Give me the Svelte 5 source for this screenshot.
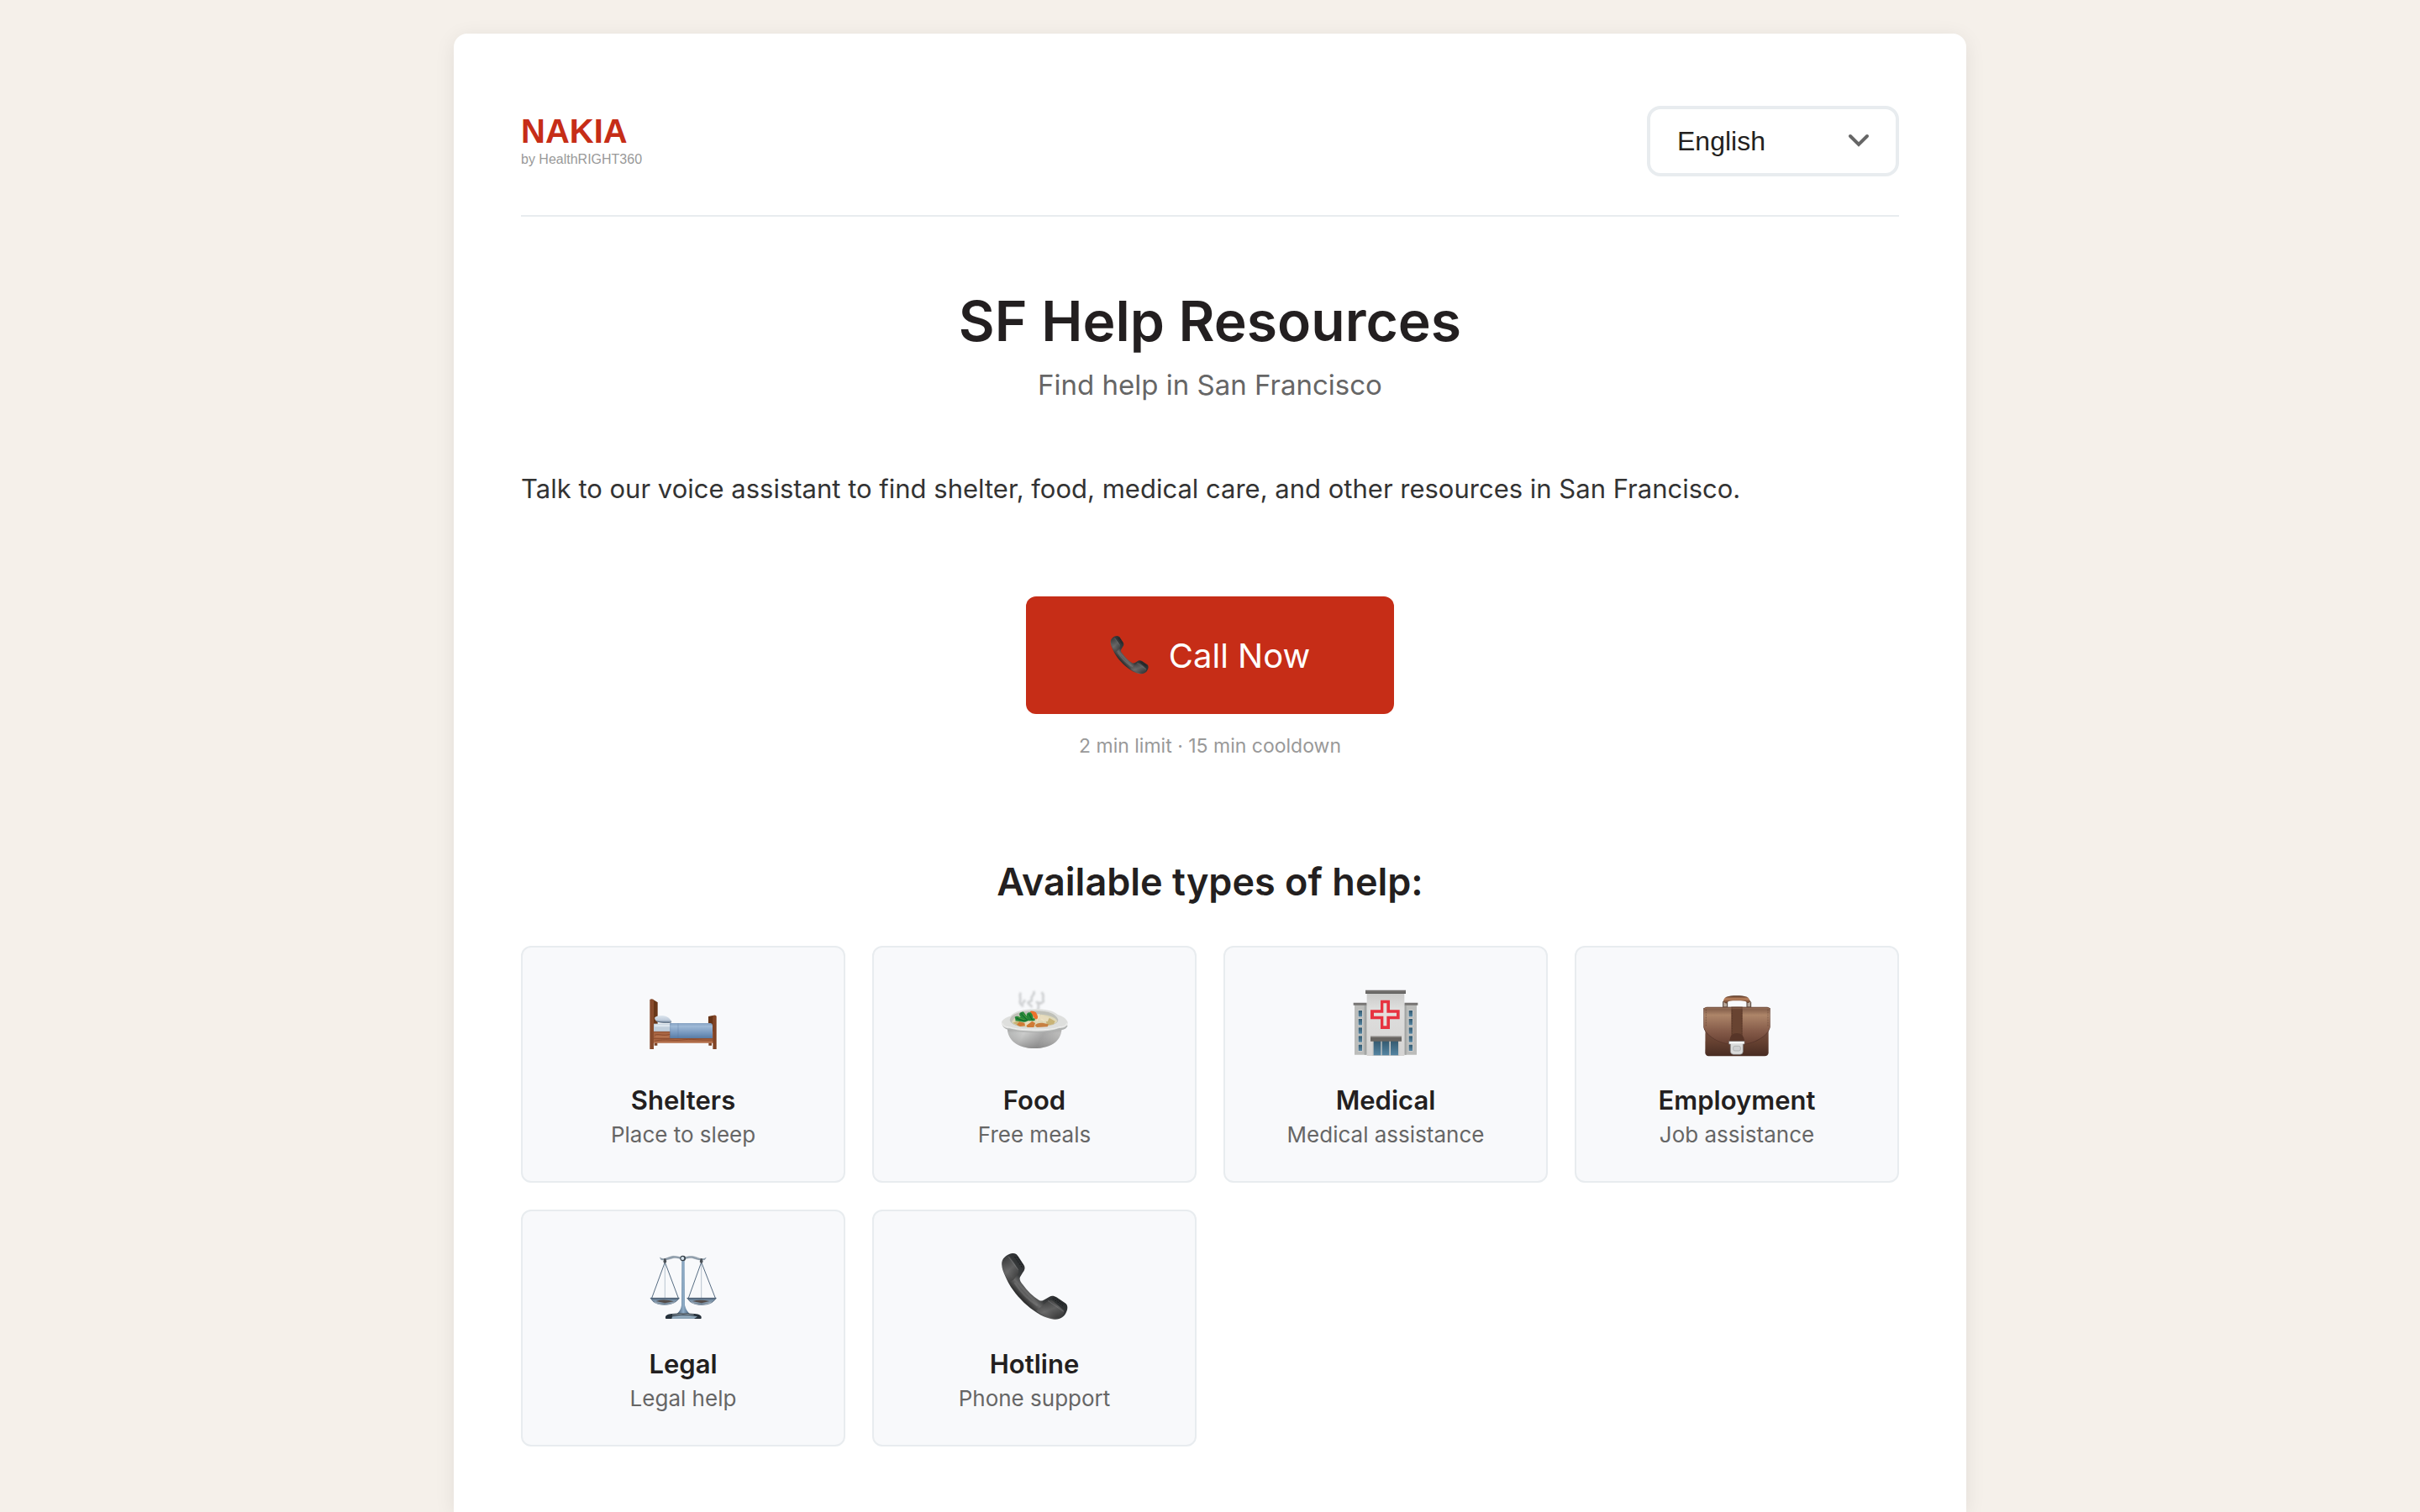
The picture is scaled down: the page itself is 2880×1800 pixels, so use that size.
<script>
	let language = $state("en");

	const languages = [
		{ code: "en", label: "English" },
		{ code: "es", label: "Español" },
		{ code: "zh", label: "中文" },
		{ code: "tl", label: "Filipino" }
	];

	const categories = [
		{ icon: "bed", title: "Shelters", text: "Place to sleep" },
		{ icon: "food", title: "Food", text: "Free meals" },
		{ icon: "hospital", title: "Medical", text: "Medical assistance" },
		{ icon: "briefcase", title: "Employment", text: "Job assistance" },
		{ icon: "scales", title: "Legal", text: "Legal help" },
		{ icon: "phone", title: "Hotline", text: "Phone support" }
	];
</script>

{#snippet phone(id)}
	<svg viewBox="93 67 240 240" aria-hidden="true">
		<defs>
			<linearGradient id="{id}-body" gradientUnits="userSpaceOnUse" x1="235" y1="160" x2="165" y2="225">
				<stop offset="0" stop-color="#2c2f31" />
				<stop offset="0.5" stop-color="#3b3d3e" />
				<stop offset="0.72" stop-color="#6a6a6a" />
				<stop offset="1" stop-color="#303030" />
			</linearGradient>
			<linearGradient id="{id}-ear" x1="0" y1="0" x2="0.6" y2="1">
				<stop offset="0" stop-color="#333" />
				<stop offset="0.6" stop-color="#6b6b6b" />
				<stop offset="1" stop-color="#404040" />
			</linearGradient>
		</defs>
		<path fill="url(#{id}-body)" d="M97 98C101 81 119 68 136 67C146 67 152 72 156 79L176 110C181 119 178 127 173 134L162 152C158 161 164 169 171 178C189 202 207 221 229 234C238 239 244 236 250 232L267 222C276 217 285 220 292 224L323 245C332 251 333 263 328 275C320 296 303 305 283 303C251 300 217 279 187 253C152 223 124 185 109 149C101 130 94 115 97 98Z" />
		<path fill="url(#{id}-ear)" d="M99 99C103 83 116 72 124 77C133 91 146 108 155 124C161 135 152 145 143 156C137 164 128 169 121 165C109 147 95 118 99 99Z" opacity="0.8" />
		<path fill="url(#{id}-ear)" d="M262 237C271 230 281 238 290 247L318 270C324 279 309 298 292 300C267 303 237 286 219 272C230 264 249 247 262 237Z" opacity="0.8" />
		<path fill="none" stroke="#85888a" stroke-width="2" d="M121 80L155 126M261 236L317 275" opacity="0.7" />
		<path fill="none" stroke="#888" stroke-width="7" stroke-linecap="round" d="M144 174C164 205 193 234 222 252" opacity="0.35" />
		<path fill="none" stroke="#17191b" stroke-width="3" stroke-linecap="round" stroke-dasharray="4 6" d="M143 80L168 116M151 80L171 108M279 229L314 253M285 226L318 249" />
	</svg>
{/snippet}

{#snippet bed()}
	<svg viewBox="99 55 240 240" aria-hidden="true">
		<defs>
			<linearGradient id="bed-blanket" x1="0" y1="0" x2="0" y2="1">
				<stop offset="0" stop-color="#7897bb" />
				<stop offset="0.2" stop-color="#a0bad7" />
				<stop offset="0.7" stop-color="#7294bc" />
				<stop offset="1" stop-color="#587ca5" />
			</linearGradient>
			<linearGradient id="bed-post" x1="0" y1="0" x2="1" y2="0">
				<stop offset="0" stop-color="#84482a" />
				<stop offset="0.5" stop-color="#bc7850" />
				<stop offset="1" stop-color="#7d4022" />
			</linearGradient>
			<linearGradient id="bed-pillow" x1="0" y1="0" x2="0" y2="1">
				<stop offset="0" stop-color="#dce5ee" />
				<stop offset="0.6" stop-color="#c0ccdb" />
				<stop offset="1" stop-color="#667b92" />
			</linearGradient>
		</defs>
		<path fill="#693719" d="M112 91L128 101V230H112Z" />
		<path fill="#673417" d="M309 151L328 147V228H309Z" />
		<path fill="#7c4427" d="M116 245H127V255H116ZM310 245H321V255H310Z" />
		<rect x="113" y="177" width="63" height="31" fill="#c0cedb" />
		<path fill="#dce5ed" d="M117 180H174V188H117Z" />
		<path fill="url(#bed-pillow)" d="M117 156C122 149 136 147 151 149C167 153 174 161 178 171C166 176 145 175 131 172C123 169 118 164 117 156Z" />
		<path fill="none" stroke="#435468" stroke-width="2" d="M124 168C139 174 155 172 176 173" />
		<rect x="113" y="205" width="214" height="41" fill="#a96643" />
		<path fill="none" stroke="#7e4024" stroke-width="2" d="M113 206H176M113 230H326M117 239C160 229 181 240 214 235S278 237 326 235M117 218C134 211 145 223 172 215" />
		<path fill="none" stroke="#cb8a60" stroke-width="2" d="M114 244H325M120 223L168 224" />
		<path fill="url(#bed-blanket)" d="M172 175H318Q324 176 324 184V229H172Z" />
		<path fill="none" stroke="#55779e" stroke-width="1" d="M173 177V228M201 175V229" />
		<path fill="none" stroke="#bdcee0" stroke-width="2" d="M177 178H316" opacity="0.5" />
		<path fill="url(#bed-post)" d="M100 91Q106 86 114 91V268H100ZM325 149Q332 144 338 150V268H325Z" />
	</svg>
{/snippet}

{#snippet food()}
	<svg viewBox="93 55 240 240" aria-hidden="true">
		<defs>
			<linearGradient id="bowl-side" x1="0" y1="0" x2="1" y2="0.2">
				<stop offset="0" stop-color="#b2b4b3" />
				<stop offset="0.35" stop-color="#d1d2d1" />
				<stop offset="0.7" stop-color="#aaa" />
				<stop offset="1" stop-color="#c2c2c1" />
			</linearGradient>
			<linearGradient id="bowl-shade" x1="0" y1="0" x2="0" y2="1">
				<stop offset="0" stop-color="#777" stop-opacity="0.5" />
				<stop offset="0.3" stop-color="#999" stop-opacity="0.1" />
				<stop offset="1" stop-color="#666" stop-opacity="0.5" />
			</linearGradient>
			<filter id="steam" x="-20%" y="-20%" width="140%" height="140%">
				<feGaussianBlur stdDeviation="3" />
			</filter>
		</defs>
		<g fill="none" stroke="#a4a7a9" stroke-width="8" opacity="0.5" filter="url(#steam)">
			<path d="M164 66C157 80 166 83 162 96S171 107 172 117" />
			<path d="M210 61C219 74 199 76 203 89S187 95 191 104S207 110 201 119" />
			<path d="M238 65C252 75 240 82 245 94S222 99 227 111S222 121 225 136" />
			<path d="M180 92L171 106M218 99L239 106" />
		</g>
		<path fill="url(#bowl-side)" d="M116 187C116 212 124 230 140 243C158 258 184 265 213 265S270 258 288 243C304 230 311 212 311 187Z" />
		<path fill="url(#bowl-shade)" d="M116 187C116 212 124 230 140 243C158 258 184 265 213 265S270 258 288 243C304 230 311 212 311 187Z" />
		<path fill="#b0b2b1" d="M99 183C105 195 117 200 129 199C151 205 186 209 221 208C253 208 285 205 302 199C317 201 328 194 332 183Z" />
		<path fill="#dedfdd" d="M96 172C98 162 112 154 127 150C144 132 174 125 213 125S279 130 297 145C313 150 329 160 332 172C334 185 320 194 301 193C276 202 248 205 211 204C173 204 145 200 125 194C109 195 94 185 96 172Z" />
		<path fill="#bfc0b8" d="M125 164C129 143 161 132 211 131S291 142 298 163C299 179 268 188 213 190S129 182 125 164Z" />
		<path fill="#dfd8b8" d="M132 172C137 155 165 143 213 143S289 154 295 168C286 181 256 187 216 189S145 184 132 172Z" />
		<path fill="#c8b377" d="M255 169L267 157L287 168L282 179L258 184ZM136 174L156 165L169 176L160 186Z" />
		<path fill="#e8dcbd" d="M225 155L238 146L265 155L261 169L230 166ZM167 171L192 166L207 176L184 188Z" />
		<path fill="#d07b36" d="M150 181L160 170L178 174L180 185L162 187ZM184 184L205 168L216 175L211 190L188 190Z" />
		<path fill="#c78042" d="M215 183C222 173 239 171 263 179L260 188L222 190Z" />
		<path fill="#ed722b" d="M197 133C203 129 212 132 219 137L229 161H215Z" />
		<path fill="#248637" d="M143 153C149 147 158 151 164 154C155 141 161 137 173 134C181 142 184 148 187 155C180 140 192 135 200 137C207 144 208 151 209 158C216 156 217 163 213 167L189 167C180 176 162 168 145 167C147 162 144 159 143 153Z" />
		<path fill="none" stroke="#0e642e" stroke-width="3" d="M149 158L183 168M165 140L189 166M193 142L206 165" />
		<path fill="none" stroke="#5da33d" stroke-width="2" d="M155 155L178 163M173 142L187 158" />
		<path fill="none" stroke="#eee4c4" stroke-width="4" d="M229 142V151L222 168M238 160L249 168" />
		<path fill="none" stroke="#f1f1f0" stroke-width="3" d="M98 174C104 187 113 189 126 190C156 202 281 202 301 189C315 190 328 183 330 174" />
	</svg>
{/snippet}

{#snippet hospital()}
	<svg viewBox="87 55 240 240" aria-hidden="true">
		<defs>
			<linearGradient id="wall" x1="0" y1="0" x2="0" y2="1">
				<stop offset="0" stop-color="#c9c9c8" />
				<stop offset="0.25" stop-color="#dededd" />
				<stop offset="1" stop-color="#d5d4d3" />
			</linearGradient>
			<linearGradient id="glass" x1="0" y1="0" x2="0" y2="1">
				<stop offset="0" stop-color="#345a70" />
				<stop offset="1" stop-color="#5585a2" />
			</linearGradient>
		</defs>
		<path fill="#bcbdbb" d="M96 108H140V288H96ZM274 108H318V288H274Z" />
		<path fill="#a3a5a4" d="M131 111H140V288H131ZM274 111H281V288H274Z" />
		<path fill="#777574" d="M92 102H140V111H92ZM274 102H322V111H274Z" />
		<path fill="url(#wall)" d="M140 66H274V292H140Z" />
		<path fill="#73716f" d="M135 57H279V69H135Z" />
		<path fill="#5e5d5b" d="M135 66H279V70H135Z" />
		{#each [128, 158, 189, 219, 250] as y}
			<g fill="#d4d4d2">
				<rect x="108" y={y} width="17" height="26" />
				<rect x="288" y={y} width="17" height="26" />
			</g>
			<g fill="url(#glass)">
				<rect x="110" y={y + 2} width="13" height="22" />
				<rect x="290" y={y + 2} width="13" height="22" />
			</g>
		{/each}
		<path fill="#e73340" d="M189 93H222V128H257V161H222V196H189V161H153V128H189Z" />
		<path fill="#e5dfdc" d="M199 104H211V138H246V150H211V185H199V150H165V138H199Z" />
		<path fill="#c9c9c7" d="M160 237H256V292H160Z" />
		<path fill="url(#glass)" d="M164 238H190V290H164ZM194 238H220V290H194ZM225 238H252V290H225Z" />
		<path fill="#686562" d="M153 222H264V240H153Z" />
		<path fill="#898583" d="M153 222H264V226H153Z" />
	</svg>
{/snippet}

{#snippet briefcase()}
	<svg viewBox="111 55 240 240" aria-hidden="true">
		<defs>
			<linearGradient id="case-back" x1="0" y1="0" x2="0" y2="1">
				<stop offset="0" stop-color="#8c6655" />
				<stop offset="0.7" stop-color="#664131" />
				<stop offset="1" stop-color="#482c22" />
			</linearGradient>
			<linearGradient id="case-flap" x1="0" y1="0" x2="0" y2="1">
				<stop offset="0" stop-color="#775341" />
				<stop offset="0.22" stop-color="#ad8569" />
				<stop offset="0.65" stop-color="#855b49" />
				<stop offset="1" stop-color="#684133" />
			</linearGradient>
			<linearGradient id="case-handle" x1="0" y1="0" x2="0" y2="1">
				<stop offset="0" stop-color="#50301f" />
				<stop offset="0.4" stop-color="#bd8460" />
				<stop offset="1" stop-color="#553321" />
			</linearGradient>
		</defs>
		<path fill="#b7a79a" stroke="#4d3b32" stroke-width="3" d="M182 118V98L190 92L197 98V118ZM267 118V98L274 92L281 101V118Z" />
		<path fill="url(#case-handle)" d="M183 99C183 80 200 77 230 77S278 80 278 100L269 104C265 95 251 95 230 95S200 95 193 105Z" />
		<path fill="url(#case-back)" d="M119 121H344V281Q343 293 330 293H130Q119 292 118 281Z" />
		<path fill="#55342a" d="M112 121Q232 114 350 121V190C343 220 296 250 252 252H212C165 249 117 218 112 190Z" />
		<path fill="url(#case-flap)" d="M113 123Q116 117 124 117H339Q347 117 349 124V188C344 218 296 247 251 250H211C164 246 118 216 113 188Z" />
		<path fill="#684331" d="M211 117H251V235H211Z" />
		<path fill="none" stroke="#3d271f" stroke-width="2" stroke-dasharray="5 4" d="M214 120V235M249 120V235M121 126V188M342 126V188" opacity="0.6" />
		<path fill="none" stroke="#ba9174" stroke-width="2" d="M117 123H345" opacity="0.5" />
		<path fill="#573528" d="M205 240C206 219 216 211 231 211S257 220 258 240Z" />
		<path fill="#dadbdb" stroke="#828282" stroke-width="2" d="M203 240H258V250H253V277Q252 287 242 287H219Q209 286 208 277V250H203Z" />
		<path fill="#f5f5f5" d="M204 241H257V248H204Z" />
		<rect x="218" y="257" width="26" height="17" rx="6" fill="#cfd0d1" stroke="#a2a4a5" stroke-width="2" />
	</svg>
{/snippet}

{#snippet scales()}
	<svg viewBox="99 67 240 240" aria-hidden="true">
		<defs>
			<linearGradient id="steel" x1="0" y1="0" x2="1" y2="0">
				<stop offset="0" stop-color="#45586d" />
				<stop offset="0.5" stop-color="#8fadc8" />
				<stop offset="1" stop-color="#48617c" />
			</linearGradient>
			<linearGradient id="pan" x1="0" y1="0" x2="0" y2="1">
				<stop offset="0" stop-color="#425366" />
				<stop offset="0.3" stop-color="#7891a8" />
				<stop offset="0.7" stop-color="#8a9cac" />
				<stop offset="1" stop-color="#304b65" />
			</linearGradient>
		</defs>
		<g fill="none" stroke="#566c82" stroke-width="3">
			<path d="M154 89V226M284 89V226" stroke="#9aabbb" stroke-width="2" />
			<path d="M154 99L107 227M154 99L202 227M284 99L238 227M284 99L334 227" />
		</g>
		<path fill="#92a0ad" stroke="#68798a" stroke-width="1" d="M136 82C151 93 164 80 183 77C198 77 205 80 218 83C231 79 241 77 255 78C271 80 285 93 301 83L296 90C277 94 264 87 252 84C238 82 229 88 218 89C207 87 198 82 184 84C169 88 156 94 140 90Z" />
		<path fill="url(#steel)" d="M214 87H224L225 252C229 268 235 275 242 283H197C207 274 211 266 213 253Z" />
		<circle cx="218" cy="85" r="10" fill="#353f48" />
		<circle cx="217" cy="85" r="6" fill="#d6e3ed" />
		<path fill="#4b5157" d="M151 86H157L160 98L154 104L148 98ZM281 86H287L290 98L284 104L278 98Z" />
		<path fill="url(#pan)" stroke="#3d5268" stroke-width="2" d="M102 227H205C203 232 198 235 194 239C174 254 133 255 113 240ZM233 227H337C335 233 328 236 323 242C302 255 263 254 244 240Z" />
		<path fill="#544c49" d="M122 238Q150 229 186 239L154 245ZM252 238Q279 230 313 238L285 245Z" />
		<path fill="none" stroke="#c0ccd6" stroke-width="2" d="M117 243Q152 258 188 243M248 243Q282 258 319 243" />
		<path fill="#26313b" d="M157 301C152 290 163 284 179 283C205 280 234 280 260 283C275 284 289 290 283 301Z" />
		<path fill="#8ca4b7" d="M180 293C196 287 246 286 270 293L258 301H178Z" />
		<path fill="none" stroke="#c7d3db" stroke-width="2" d="M180 287Q219 280 257 286" />
	</svg>
{/snippet}

<main class="page">
	<div class="container">
		<header>
			<div class="logo">
				<span class="logo-name">NAKIA</span>
				<span class="logo-tagline">by HealthRIGHT360</span>
			</div>
			<div class="language">
				<select bind:value={language} aria-label="Language">
					{#each languages as lang}
						<option value={lang.code}>{lang.label}</option>
					{/each}
				</select>
				<svg class="chevron" viewBox="0 0 28 20" aria-hidden="true">
					<path d="M4 4L14 14L24 4" />
				</svg>
			</div>
		</header>

		<section class="hero">
			<h1>SF Help Resources</h1>
			<p class="subtitle">Find help in San Francisco</p>
		</section>

		<p class="intro">Talk to our voice assistant to find shelter, food, medical care, and other resources in San Francisco.</p>

		<section class="call">
			<button class="call-button" type="button">
				{@render phone("call")}
				<span>Call Now</span>
			</button>
			<p class="call-note">2 min limit · 15 min cooldown</p>
		</section>

		<section class="resources">
			<h2>Available types of help:</h2>
			<div class="grid">
				{#each categories as category}
					<article class="card">
						<div class="icon">
							{#if category.icon === "bed"}
								{@render bed()}
							{:else if category.icon === "food"}
								{@render food()}
							{:else if category.icon === "hospital"}
								{@render hospital()}
							{:else if category.icon === "briefcase"}
								{@render briefcase()}
							{:else if category.icon === "scales"}
								{@render scales()}
							{:else}
								{@render phone("hotline")}
							{/if}
						</div>
						<h3>{category.title}</h3>
						<p>{category.text}</p>
					</article>
				{/each}
			</div>
		</section>
	</div>
</main>

<style>
	:global(body) {
		background: #f5f0ea;
	}

	.page {
		display: flex;
		flex-direction: column;
		align-items: center;
		box-sizing: border-box;
		min-height: 100vh;
		padding: 40px 40px 0;
		color: #231f20;
		font-family: Inter, "Liberation Sans", sans-serif;
	}

	.container {
		flex: 1;
		box-sizing: border-box;
		width: 100%;
		max-width: 1800px;
		padding: 80px 80px 76px;
		background: #fff;
		border-radius: 16px 16px 0 0;
		box-shadow: 0 4px 24px rgba(0, 0, 0, 0.08);
	}

	h1, h2, h3, p {
		margin: 0;
	}

	header {
		display: flex;
		justify-content: space-between;
		align-items: center;
		min-height: 96px;
		padding-bottom: 40px;
		border-bottom: 2px solid #e8ecef;
		font-family: "Liberation Sans", Arial, sans-serif;
	}

	.logo {
		display: flex;
		flex-direction: column;
	}

	.logo-name {
		color: #c62d17;
		font-size: 40px;
		font-weight: 700;
		line-height: 44px;
	}

	.logo-tagline {
		color: #999;
		font-size: 16px;
		line-height: 24px;
	}

	.language {
		position: relative;
		width: 300px;
	}

	select {
		appearance: none;
		width: 100%;
		height: 84px;
		padding: 0 72px 0 32px;
		border: 4px solid #e8ecef;
		border-radius: 16px;
		background: #fff;
		color: #231f20;
		font-family: inherit;
		font-size: 32px;
		cursor: pointer;
	}

	.chevron {
		position: absolute;
		top: 32px;
		right: 34px;
		width: 28px;
		height: 20px;
		fill: none;
		stroke: #666;
		stroke-width: 4;
		stroke-linecap: round;
		pointer-events: none;
	}

	.hero {
		padding-top: 80px;
		text-align: center;
	}

	h1 {
		font-size: 66px;
		font-weight: 600;
		line-height: 88px;
	}

	.subtitle {
		margin-top: 8px;
		color: #666;
		font-size: 33px;
		line-height: 48px;
	}

	.intro {
		margin-top: 76px;
		color: #333;
		font-size: 31px;
		line-height: 48px;
	}

	.call {
		display: flex;
		flex-direction: column;
		align-items: center;
		margin-top: 104px;
	}

	.call-button {
		display: flex;
		align-items: center;
		gap: 24px;
		height: 140px;
		padding: 0 100px;
		border: 0;
		border-radius: 12px;
		background: #c62d17;
		color: #fff;
		font-family: inherit;
		font-size: 40px;
		font-weight: 400;
		cursor: pointer;
	}

	.call-button :global(svg) {
		width: 46px;
		height: 46px;
	}

	.call-note {
		margin-top: 20px;
		color: #999;
		font-size: 23px;
		line-height: 36px;
	}

	.resources {
		margin-top: 112px;
	}

	h2 {
		font-size: 45px;
		font-weight: 600;
		line-height: 64px;
		text-align: center;
	}

	.grid {
		display: grid;
		grid-template-columns: repeat(4, 1fr);
		gap: 32px;
		margin-top: 44px;
	}

	.card {
		padding: 50px 32px 34px;
		border: 2px solid #e8ecef;
		border-radius: 12px;
		background: #f8f9fb;
		text-align: center;
	}

	.icon {
		height: 80px;
	}

	.icon svg {
		width: 80px;
		height: 80px;
	}

	h3 {
		margin-top: 32px;
		font-size: 31px;
		font-weight: 600;
		line-height: 40px;
	}

	.card p {
		color: #666;
		font-size: 26px;
		line-height: 42px;
	}

	@media (max-width: 1200px) {
		.grid {
			grid-template-columns: repeat(2, 1fr);
		}
	}
</style>
